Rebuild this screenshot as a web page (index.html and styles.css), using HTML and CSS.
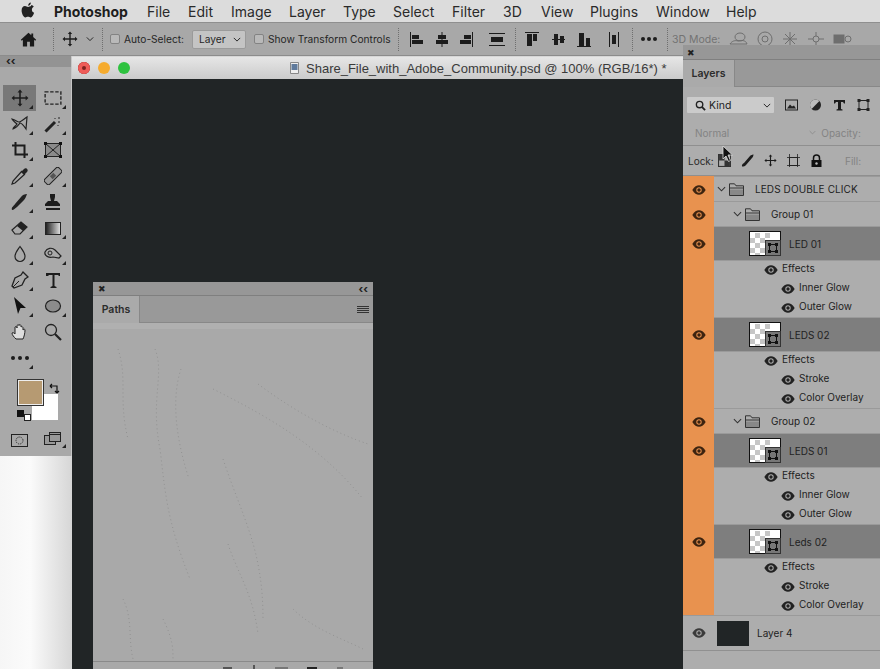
FILE: index.html
```html
<!DOCTYPE html>
<html lang="en">
<head>
<meta charset="utf-8">
<title>Photoshop</title>
<link rel="stylesheet" href="styles.css">
</head>
<body>
<svg class="defs" width="0" height="0" aria-hidden="true">
  <symbol id="eye" viewBox="0 0 14 10"><path fill-rule="evenodd" d="M.3 5C2.400 1.500 4.600.3 7 .3s4.600 1.200 6.700 4.700C11.600 8.500 9.400 9.700 7 9.700S2.400 8.500.3 5zM7 2.300a2.700 2.700 0 1 0 0 5.400 2.700 2.700 0 0 0 0-5.400z" fill="currentColor"/><circle cx="7" cy="5" r="1.700" fill="currentColor"/></symbol>
  <symbol id="folder" viewBox="0 0 15 13"><path d="M.5 12.500V.8h5l1.500 2h7.500v9.700z" fill="none" stroke="#333"/><path d="M1 6.500h13V12H1z" fill="#888"/><path d="M.5 5h14" stroke="#333"/></symbol>
  <symbol id="chev" viewBox="0 0 10 6"><path d="M1 1l4 4 4-4" fill="none" stroke="currentColor" stroke-width="1.200"/></symbol>
  <symbol id="thumb" viewBox="0 0 32 25"><rect width="32" height="25" fill="#111"/><rect x="1" y="1" width="30" height="23" fill="#fff"/><path fill="#c6c6c6" d="M1 7h5v5H1zM11 7h5v5h-5zM6 12h5v5H6zM16 12h5v5h-5zM1 17h5v5H1zM11 17h5v5h-5zM6 2h5v5H6zM16 2h5v5h-5zM6 22h5v2H6zM16 22h5v2h-5z"/><rect x="16.500" y="9.500" width="15" height="15" fill="#777" stroke="#333"/><rect x="20.500" y="13.500" width="7" height="7" fill="none" stroke="#111"/><path fill="#111" d="M19 12h3v3h-3zM26 12h3v3h-3zM19 19h3v3h-3zM26 19h3v3h-3z"/></symbol>
  <symbol id="corner" viewBox="0 0 4 4"><path d="M4 0v4H0z" fill="#222"/></symbol>
  <symbol id="move" viewBox="0 0 16 16"><path d="M8 .5L10.200 3H8.700v4.300H13V5.800L15.500 8 13 10.200V8.700H8.700V13h1.500L8 15.500 5.800 13h1.500V8.700H3v1.500L.5 8 3 5.800v1.500h4.300V3H5.800z" fill="#1c1c1c"/></symbol>
</svg>

<div class="screen">
  <header class="menubar">
    <svg class="apple" viewBox="0 0 14 16"><path fill="#222" d="M10.200 4.100c-1.300 0-1.900.8-3 .8-1.200 0-2-.8-3.200-.8C2 4.100.6 5.900.6 8.400c0 3 2 7 3.800 7 .9 0 1.400-.6 2.600-.6s1.600.6 2.600.6c1.500 0 3-2.700 3.500-4.600-1.300-.5-2.200-1.700-2.200-3.100 0-1.300.7-2.400 1.900-3-.7-.9-1.700-1.600-2.600-1.600zM9.800.4C8.400.6 7 2 7.200 3.700 8.700 3.700 10 2.100 9.800.4z"/></svg>
    <span class="menu-app">Photoshop</span>
    <nav class="menu-items">
      <span class="m-file">File</span><span class="m-edit">Edit</span><span class="m-image">Image</span><span class="m-layer">Layer</span><span class="m-type">Type</span><span class="m-select">Select</span><span class="m-filter">Filter</span><span class="m-3d">3D</span><span class="m-view">View</span><span class="m-plugins">Plugins</span><span class="m-window">Window</span><span>Help</span>
    </nav>
  </header>

  <div class="options">
    <svg class="o-home" viewBox="0 0 18 16"><path fill="#1a1a1a" d="M9 .8L.8 8.200l1 1L3 8.200V15.500h4.500v-5h3v5H15V8.200l1.200 1 1-1L14 5.300V1.500h-2v2z"/></svg>
    <i class="sep s-a"></i>
    <svg class="o-move"><use href="#move"/></svg>
    <svg class="o-chev"><use href="#chev"/></svg>
    <i class="sep s-b"></i>
    <i class="check c-a"></i>
    <span class="o-label l-auto">Auto-Select:</span>
    <span class="o-select">Layer<svg class="sel-chev"><use href="#chev"/></svg></span>
    <i class="check c-b"></i>
    <span class="o-label l-show">Show Transform Controls</span>
    <i class="sep s-c"></i>
    <svg class="o-align" viewBox="0 0 95 15" width="95" height="15">
      <g fill="#1c1c1c">
        <path d="M0 0h1v15H0zM2 3h7v4H2zM2 8h11v4H2z"/>
        <path d="M31.500 0h1v15h-1zM28 3h8v4h-8zM26 8h12v4H26z"/>
        <path d="M62 0h1v15h-1zM54 3h7v4h-7zM50 8h11v4H50z"/>
        <path d="M79 1h16v1H79zM79 13h16v1H79zM81 5h12v5H81z"/>
      </g>
    </svg>
    <i class="sep s-d"></i>
    <svg class="o-align2" viewBox="0 0 95 15" width="95" height="15">
      <g fill="#1c1c1c">
        <path d="M0 0h14v1H0zM2 2h5v12H2zM8 2h4v7H8z"/>
        <path d="M27 7h13v1H27zM29 2h4v11h-4zM35 4h4v7h-4z"/>
        <path d="M52 14h14v1H52zM54 1h5v13h-5zM61 6h4v8h-4z"/>
        <path d="M84 0h1v15h-1zM93 0h1v15h-1zM87 3h4v9h-4z"/>
      </g>
    </svg>
    <i class="sep s-dd"></i>
    <span class="dots"><b></b><b></b><b></b></span>
    <i class="sep s-e"></i>
    <span class="o-label o-3d">3D Mode:</span>
    <svg class="o-3dicons" viewBox="0 0 124 16" width="124" height="16">
      <g fill="none" stroke="#6e6e6e">
        <path d="M1 13c2-3 5-4 8-3 3-1 8-1 9 3H1zM6 6a5 4 0 1 1 10 0 5 4 0 1 1-10 0z"/>
        <circle cx="36" cy="8" r="7"/><circle cx="36" cy="8" r="3"/>
        <path d="M61 1v14M54 8h14M56 3l10 10M66 3L56 13"/>
        <circle cx="87" cy="8" r="3"/><path d="M87 1v4M87 11v4M79 8h5M90 8h5"/>
        <rect x="105" y="4" width="10" height="8" fill="#6e6e6e"/><circle cx="119" cy="8" r="3"/>
      </g>
    </svg>
  </div>

  <main class="desktop">
    <section class="doc">
      <div class="doc-title">
        <span class="light red"></span><span class="light amber"></span><span class="light green"></span>
        <svg class="doc-icon" viewBox="0 0 9 12"><path d="M.5.500h8v11h-8z" fill="#eee" stroke="#888"/><rect x="1.500" y="2" width="6" height="6" fill="#5f7a9c"/></svg>
        <span class="doc-name">Share_File_with_Adobe_Community.psd @ 100% (RGB/16*) *</span>
      </div>
    </section>

    <aside class="tools">
      <div class="tools-head">‹‹</div>
      <div class="tool-grid">
        <span class="tool active"><svg class="ic" viewBox="0 0 16 16"><use href="#move"/></svg><svg class="cn"><use href="#corner"/></svg></span>
        <span class="tool"><svg class="ic" viewBox="0 0 16 16"><rect x="1" y="2.500" width="14" height="11" fill="none" stroke="#222" stroke-width="1.200" stroke-dasharray="3 1.500"/></svg><svg class="cn"><use href="#corner"/></svg></span>
        <span class="tool"><svg class="ic" viewBox="0 0 18 18"><path d="M1 4c4 1 5 3 7 3s5-3 8-5l-1 12c-2-3-4-6-6-6-2 3-4 5-7 6 0-2 3-3 4-5-2-2-4-3-5-5z" fill="none" stroke="#222" stroke-width="1.200"/></svg><svg class="cn"><use href="#corner"/></svg></span>
        <span class="tool"><svg class="ic" viewBox="0 0 18 18"><path d="M1.500 16.500L11 7" stroke="#222" stroke-width="3"/><path d="M11 3v1M15 2v2M16 7h-2M14 10v1" stroke="#222"/></svg><svg class="cn"><use href="#corner"/></svg></span>
        <span class="tool"><svg class="ic" viewBox="0 0 18 18"><path d="M1 4.500h12.500V17M4.500 1v12.500H17" fill="none" stroke="#1c1c1c" stroke-width="2"/></svg><svg class="cn"><use href="#corner"/></svg></span>
        <span class="tool"><svg class="ic" viewBox="0 0 18 18"><rect x="1.500" y="2.500" width="15" height="13" fill="#8a8a8a" stroke="#222"/><path d="M1.500 2.500l15 13M16.500 2.500l-15 13" stroke="#222"/><path fill="#111" d="M0 1h3v3H0zM15 1h3v3h-3zM0 14h3v3H0zM15 14h3v3h-3z"/></svg></span>
        <span class="tool"><svg class="ic" viewBox="0 0 18 18"><path d="M11 4L2 14l-1 3 3-1 10-9" fill="none" stroke="#222" stroke-width="1.200"/><path d="M10 5l3 3 2-2 1-1c2-2-1-5-3-3l-1 1z" fill="#222"/></svg><svg class="cn"><use href="#corner"/></svg></span>
        <span class="tool"><svg class="ic" viewBox="0 0 18 18"><g transform="rotate(-45 9 9)"><rect x="-1" y="5.500" width="20" height="7" rx="2" fill="#999" stroke="#222"/><path d="M6.500 7h5v4h-5z" fill="#555"/></g></svg><svg class="cn"><use href="#corner"/></svg></span>
        <span class="tool"><svg class="ic" viewBox="0 0 18 18"><path d="M1 17c-1-3 2-4 3-6l6-7c1-2 4-3 6-3-1 3-2 5-3 6l-7 7c-2 1-3 3-5 3z" fill="#222"/></svg><svg class="cn"><use href="#corner"/></svg></span>
        <span class="tool"><svg class="ic" viewBox="0 0 18 18"><path d="M6 1h5v3l-1 4h3l3 3v2H1v-2l3-3h3L6 4zM2 15h14v2H2z" fill="#1c1c1c"/></svg></span>
        <span class="tool"><svg class="ic" viewBox="0 0 18 18"><path d="M1 11L10 3l6 5-7 7H4z" fill="none" stroke="#222" stroke-width="1.200"/><path d="M6 7l4-4 6 5-4 4z" fill="#222"/></svg><svg class="cn"><use href="#corner"/></svg></span>
        <span class="tool"><span class="grad"></span><svg class="cn"><use href="#corner"/></svg></span>
        <span class="tool"><svg class="ic" viewBox="0 0 18 18"><path d="M9 1.500c2 3 5 6 5 10a5 5 0 0 1-10 0c0-4 3-7 5-10z" fill="none" stroke="#222" stroke-width="1.200"/></svg><svg class="cn"><use href="#corner"/></svg></span>
        <span class="tool"><svg class="ic" viewBox="0 0 18 18"><path d="M1 7c2-4 7-5 10-2l6 6-2 2-6-1c-4 1-9-1-8-5z" fill="none" stroke="#222" stroke-width="1.200"/><circle cx="6" cy="8" r="2" fill="none" stroke="#222"/></svg><svg class="cn"><use href="#corner"/></svg></span>
        <span class="tool"><svg class="ic" viewBox="0 0 18 18"><path d="M12 1l5 5-3 2-3 6-8 3-2-2 3-8 6-3z" fill="none" stroke="#222" stroke-width="1.300"/><path d="M2 16l6-6" stroke="#222"/></svg><svg class="cn"><use href="#corner"/></svg></span>
        <span class="tool"><svg class="ic" viewBox="0 0 18 18"><path d="M2 2h14v3h-1l-1-1h-3.500v11l2 1v1H6.500v-1l2-1V4H5L4 5H2z" fill="#1c1c1c"/></svg></span>
        <span class="tool"><svg class="ic" viewBox="0 0 18 18"><path d="M3 0l12 11H9.500L7 17z" fill="#111"/></svg><svg class="cn"><use href="#corner"/></svg></span>
        <span class="tool"><svg class="ic" viewBox="0 0 18 18"><ellipse cx="9" cy="9" rx="7.500" ry="6" fill="#8c8c8c" stroke="#222" stroke-width="1.200"/></svg><svg class="cn"><use href="#corner"/></svg></span>
        <span class="tool"><svg class="ic" viewBox="0 0 18 18"><path d="M5 16c-2-2-4-4-4-6 1-1 2 0 3 1V4c1-1 2 0 2 1V2.500c1-1 2-1 2 0V2c1-1 2 0 2 1v1c1-1 2 0 2 1v2c1-1 2-1 2 0 0 3-1 7-2 9z" fill="#ddd" stroke="#222"/></svg></span>
        <span class="tool"><svg class="ic" viewBox="0 0 18 18"><circle cx="7" cy="7" r="5.500" fill="none" stroke="#222" stroke-width="1.300"/><path d="M11 11l6 6" stroke="#222" stroke-width="2.200"/></svg></span>
        <span class="tool"><span class="dots tool-dots"><b></b><b></b><b></b></span><svg class="cn"><use href="#corner"/></svg></span>
      </div>
      <div class="colors">
        <span class="fg"></span><span class="bg"></span>
        <svg class="swap" viewBox="0 0 11 11"><path d="M1 3h7v7M1 3l2-2M1 3l2 2M8 10l-2-2M8 10l2-2" fill="none" stroke="#111" stroke-width="1.200"/></svg>
        <span class="mini-bg"></span><span class="mini-fg"></span>
      </div>
      <div class="tools-foot">
        <svg viewBox="0 0 17 13" width="17" height="13"><rect x=".5" y=".5" width="16" height="12" fill="none" stroke="#222"/><circle cx="8.500" cy="6.500" r="3.500" fill="none" stroke="#222" stroke-dasharray="1 1"/></svg>
        <span class="foot-cn"><svg viewBox="0 0 17 13" width="17" height="13"><rect x=".5" y="3.500" width="11" height="9" fill="#999" stroke="#222"/><rect x="5.500" y=".5" width="11" height="9" fill="#999" stroke="#222"/><path d="M6 2.500h10" stroke="#222"/></svg><svg class="cn"><use href="#corner"/></svg></span>
      </div>
    </aside>

    <section class="paths">
      <div class="panel-head"><span class="x">✖</span><span class="coll">‹‹</span></div>
      <div class="tabs">
        <span class="tab">Paths</span>
        <span class="burger"><i></i><i></i><i></i><i></i></span>
      </div>
      <div class="strip"></div>
      <div class="paths-body">
        <svg class="traces" viewBox="0 0 280 336" width="280" height="336" preserveAspectRatio="none">
          <g fill="none" stroke="#929292" stroke-dasharray="1 3">
            <path d="M25 20c10 30 0 50 10 90"/>
            <path d="M62 20c10 25-5 50 5 100 5 40 6 70 30 130"/>
            <path d="M88 40c-10 30-5 70 8 110"/>
            <path d="M120 60c60 30 110 60 150 110"/>
            <path d="M165 55c40 30 80 50 110 60"/>
            <path d="M130 130c20 60 40 90 40 160"/>
            <path d="M135 215c10 30 25 50 30 90"/>
            <path d="M30 270c10 20 5 40 10 60"/>
            <path d="M70 290c10 20 10 30 10 40"/>
            <path d="M200 280c20 20 50 30 70 40"/>
          </g>
        </svg>
      </div>
      <div class="paths-foot"><i class="pf f1"></i><i class="pf f2"></i><i class="pf f3"></i><i class="pf f4"></i><i class="pf f5"></i></div>
    </section>

    <section class="layers">
      <div class="panel-head layers-head"><span class="x">✖</span></div>
      <div class="tabs layers-tabs"><span class="tab">Layers</span></div>
      <div class="filter-row">
        <span class="kind">
          <svg class="kind-search" viewBox="0 0 12 12"><circle cx="5" cy="5" r="3.500" fill="none" stroke="#222" stroke-width="1.500"/><path d="M7.500 7.500L11 11" stroke="#222" stroke-width="2"/></svg>Kind<svg class="kind-chev"><use href="#chev"/></svg>
        </span>
        <svg class="f-ic" viewBox="0 0 13 11"><rect x=".5" y=".5" width="12" height="10" fill="none" stroke="#222"/><path d="M2 9l3-4 2 2 2-1 2 3z" fill="#222"/></svg>
        <svg class="f-ic" viewBox="0 0 12 12"><circle cx="6" cy="6" r="5.500" fill="#222"/><path d="M6 .5a5.500 5.500 0 0 0 0 11z" fill="#bbb" transform="rotate(45 6 6)"/></svg>
        <svg class="f-ic" viewBox="0 0 12 12"><path d="M.5 1h11v3.500h-1L9.500 3H7.500v7l1.500.5V11.500H3V10.500l1.500-.5V3H2.500L1.500 4.500h-1z" fill="#1c1c1c"/></svg>
        <svg class="f-ic" viewBox="0 0 12 12"><rect x="1.500" y="1.500" width="9" height="9" fill="none" stroke="#222"/><path fill="#222" d="M0 0h3v3H0zM9 0h3v3H9zM0 9h3v3H0zM9 9h3v3H9z"/></svg>
      </div>
      <div class="blend-row">
        <span class="faint">Normal</span><svg class="blend-chev"><use href="#chev"/></svg><span class="faint opacity">Opacity:</span>
      </div>
      <div class="lock-row">
        <span class="lock-label">Lock:</span>
        <svg class="l-ic" viewBox="0 0 12 12"><rect x=".5" y=".5" width="11" height="11" fill="none" stroke="#333"/><path fill="#333" d="M1 1h5v5H1zM6 6h5v5H6z"/></svg>
        <svg class="l-ic" viewBox="0 0 13 13"><path d="M1 12.500c-.500-2 1-3 2-3.500l6-7c1-1 3-1.500 3.500-1.500 0 1-.5 2.500-1.500 3.500L5 11c-1 1-2 1.500-4 1.500z" fill="#1c1c1c"/></svg>
        <svg class="l-ic" viewBox="0 0 16 16"><use href="#move"/></svg>
        <svg class="l-ic" viewBox="0 0 13 13"><path d="M2.500 3.500h8v8h-8z" fill="none" stroke="#222"/><path d="M2.500 0v13M10.500 0v13M0 3.500h13M0 11.500h13" stroke="#222" stroke-width=".8"/></svg>
        <svg class="l-ic" viewBox="0 0 12 13"><path d="M1 6h10v7H1z" fill="#111"/><path d="M3 6V4a3 3 0 0 1 6 0v2" fill="none" stroke="#111" stroke-width="1.500"/><circle cx="6" cy="9.500" r="1.200" fill="#bbb"/></svg>
        <span class="faint fill">Fill:</span>
      </div>

      <div class="layer-list">
        <div class="row group"><span class="vis on"><svg class="eye"><use href="#eye"/></svg></span><svg class="g-chev"><use href="#chev"/></svg><svg class="g-folder"><use href="#folder"/></svg><span class="name top-name">LEDS DOUBLE CLICK</span></div>
        <div class="row group sub"><span class="vis on"><svg class="eye"><use href="#eye"/></svg></span><svg class="g-chev"><use href="#chev"/></svg><svg class="g-folder"><use href="#folder"/></svg><span class="name">Group 01</span></div>

        <div class="row layer"><span class="vis on"><svg class="eye"><use href="#eye"/></svg></span><svg class="thumb"><use href="#thumb"/></svg><span class="name">LED 01</span></div>
        <div class="fx"><span class="vis on"></span><div class="fx-list"><div class="fx-row"><svg class="eye"><use href="#eye"/></svg>Effects</div><div class="fx-row fx-sub"><svg class="eye"><use href="#eye"/></svg>Inner Glow</div><div class="fx-row fx-sub"><svg class="eye"><use href="#eye"/></svg>Outer Glow</div></div></div>

        <div class="row layer"><span class="vis on"><svg class="eye"><use href="#eye"/></svg></span><svg class="thumb"><use href="#thumb"/></svg><span class="name">LEDS 02</span></div>
        <div class="fx"><span class="vis on"></span><div class="fx-list"><div class="fx-row"><svg class="eye"><use href="#eye"/></svg>Effects</div><div class="fx-row fx-sub"><svg class="eye"><use href="#eye"/></svg>Stroke</div><div class="fx-row fx-sub"><svg class="eye"><use href="#eye"/></svg>Color Overlay</div></div></div>

        <div class="row group sub"><span class="vis on"><svg class="eye"><use href="#eye"/></svg></span><svg class="g-chev"><use href="#chev"/></svg><svg class="g-folder"><use href="#folder"/></svg><span class="name">Group 02</span></div>

        <div class="row layer"><span class="vis on"><svg class="eye"><use href="#eye"/></svg></span><svg class="thumb"><use href="#thumb"/></svg><span class="name">LEDS 01</span></div>
        <div class="fx"><span class="vis on"></span><div class="fx-list"><div class="fx-row"><svg class="eye"><use href="#eye"/></svg>Effects</div><div class="fx-row fx-sub"><svg class="eye"><use href="#eye"/></svg>Inner Glow</div><div class="fx-row fx-sub"><svg class="eye"><use href="#eye"/></svg>Outer Glow</div></div></div>

        <div class="row layer"><span class="vis on"><svg class="eye"><use href="#eye"/></svg></span><svg class="thumb"><use href="#thumb"/></svg><span class="name">Leds 02</span></div>
        <div class="fx"><span class="vis on"></span><div class="fx-list"><div class="fx-row"><svg class="eye"><use href="#eye"/></svg>Effects</div><div class="fx-row fx-sub"><svg class="eye"><use href="#eye"/></svg>Stroke</div><div class="fx-row fx-sub"><svg class="eye"><use href="#eye"/></svg>Color Overlay</div></div></div>

        <div class="row plain"><span class="vis"><svg class="eye"><use href="#eye"/></svg></span><span class="swatch"></span><span class="name">Layer 4</span></div>
      </div>
    </section>

    <svg class="cursor" viewBox="0 0 12 18"><path d="M1 1v13l3-3 2.500 5.500 2-1L6 10h4.500z" fill="#111" stroke="#ddd" stroke-width=".8"/></svg>
  </main>
</div>
</body>
</html>
```

FILE: styles.css
```css
* { box-sizing: border-box; }
html, body { margin: 0; padding: 0; }
body { width: 880px; height: 669px; overflow: hidden; font-family: "Inter", "Liberation Sans", sans-serif; color: #1e1e1e; background: #212526; }
.defs { position: absolute; }
svg { display: block; flex: none; }
.screen { width: 880px; height: 669px; display: flex; flex-direction: column; position: relative; overflow: hidden; }

/* menu bar */
.menubar { height: 23px; flex: none; background: #dcdcdc; display: flex; align-items: center; font-size: 14px; border-bottom: 1px solid #8f8f8f; }
.apple { width: 14px; height: 16px; margin: -2px 0 0 21px; }
.menu-app { font-weight: 700; margin-left: 19px; width: 93px; font-size: 14px; }
.menu-items { display: flex; color: #2a2a2a; }
.m-file { width: 41px; } .m-edit { width: 43px; } .m-image { width: 58px; } .m-layer { width: 54px; }
.m-type { width: 50px; } .m-select { width: 59px; } .m-filter { width: 51px; } .m-3d { width: 38px; }
.m-view { width: 49px; } .m-plugins { width: 66px; } .m-window { width: 70px; }

/* options bar */
.options { height: 33px; flex: none; background: #a8a8a8; display: flex; align-items: center; font-size: 10.200px; color: #262626; border-bottom: 1px solid #8c8c8c; }
.o-home { width: 17px; height: 15px; margin-left: 20px; }
.sep { width: 1px; height: 23px; flex: none; border-left: 1px dotted #6f6f6f; }
.s-a { margin-left: 16px; }
.o-move { width: 16px; height: 16px; margin-left: 8px; }
.o-chev { width: 8px; height: 6px; margin-left: 8px; color: #222; }
.s-b { margin-left: 8px; }
.check { width: 10px; height: 10px; flex: none; background: #b9b9b9; border: 1px solid #838383; border-radius: 2px; }
.c-a { margin-left: 7px; }
.o-label { flex: none; white-space: nowrap; }
.l-auto { margin-left: 4px; width: 64px; }
.o-select { width: 54px; height: 19px; flex: none; margin-left: 4px; background: #c4c4c4; border-radius: 2px; border: 1px solid #9a9a9a; display: flex; align-items: center; padding-left: 6px; position: relative; font-size: 10.200px; }
.sel-chev { width: 8px; height: 5px; margin-left: 7px; color: #222; }
.c-b { margin-left: 8px; }
.l-show { margin-left: 4px; width: 125px; }
.s-c { margin-left: 5px; }
.o-align { margin-left: 11px; }
.s-d { margin-left: 10px; }
.o-align2 { margin-left: 9px; }
.s-dd { margin-left: 12px; }
.dots { display: flex; gap: 2px; flex: none; }
.dots b { width: 4px; height: 4px; border-radius: 50%; background: #1c1c1c; display: block; }
.options .dots { margin-left: 8px; }
.s-e { margin-left: 10px; }
.o-3d { margin-left: 4px; width: 50px; color: #737373; font-size: 10.500px; }
.o-3dicons { margin-left: 7px; }

/* free desktop */
.desktop { flex: 1; position: relative; background: linear-gradient(90deg, #f6f6f6 0, #fbfbfb 30px, #d6d6d6 72px); }

.doc { position: absolute; left: 72px; top: 1px; right: 0; bottom: 0; background: #212526; }
.doc-title { height: 22px; background: linear-gradient(#e6e6e6, #cbcbcb); display: flex; align-items: center; font-size: 12.500px; color: #3a3a3a; }
.light { width: 12px; height: 12px; border-radius: 50%; flex: none; margin-right: 8px; }
.light.red { background: #ee5c58; margin-left: 6px; box-shadow: inset 0 0 0 4px #ee5c58, inset 0 0 0 6px #7d2320; }
.light.amber { background: #f5ab2e; }
.light.green { background: #2ec23f; }
.doc-icon { width: 9px; height: 12px; margin-left: 152px; }
.doc-name { margin-left: 7px; white-space: nowrap; font-family: "Liberation Sans", sans-serif; font-size: 13px; }

.tools { position: absolute; left: 0; top: 0; width: 72px; height: 400px; background: #a9a9a9; border-right: 1px solid #c7c7c7; display: flex; flex-direction: column; }
.tools-head { height: 11px; background: #939393; font-size: 11px; line-height: 10px; padding-left: 6px; font-weight: 700; flex: none; }
.tool-grid { display: grid; grid-template-columns: 33px 33px; grid-auto-rows: 26px; padding: 5px 0 0 3px; margin-top: 13px; }
.tool { display: flex; align-items: center; justify-content: center; position: relative; }
.tool.active { background: #787878; }
.ic { width: 18px; height: 18px; }
.cn { position: absolute; right: 3px; bottom: 2px; width: 4px; height: 4px; }
.grad { width: 16px; height: 13px; background: linear-gradient(90deg, #222, #ddd); border: 1px solid #222; }
.tool-dots { gap: 3px; }
.colors { position: relative; height: 44px; margin-top: 8px; flex: none; }
.fg { position: absolute; left: 18px; top: 1px; width: 25px; height: 25px; background: #b69a72; border: 1px solid #eee; z-index: 1; box-shadow: 0 0 0 1px #333; }
.bg { position: absolute; left: 32px; top: 15px; width: 26px; height: 26px; background: #fff; }
.swap { position: absolute; left: 49px; top: 4px; width: 11px; height: 11px; }
.mini-bg { position: absolute; left: 21px; top: 32px; width: 7px; height: 7px; background: #fff; margin: 3px 0 0 3px; border: 1px solid #222; }
.mini-fg { position: absolute; left: 17px; top: 31px; width: 7px; height: 7px; background: #111; }
.tools-foot { display: flex; gap: 16px; padding: 9px 0 0 11px; align-items: center; }
.foot-cn { position: relative; display: block; width: 22px; height: 16px; }
.foot-cn .cn { right: 0; bottom: 0; }

.panel-head { height: 14px; background: #979797; display: flex; align-items: center; justify-content: space-between; padding: 0 5px; font-size: 9px; line-height: 1; color: #222; border-bottom: 1px solid #7f7f7f; flex: none; }
.coll { font-size: 11px; font-weight: 700; line-height: 8px; }
.tabs { height: 27px; background: #999; display: flex; align-items: stretch; font-size: 10.500px; font-weight: 600; position: relative; justify-content: space-between; flex: none; border-bottom: 1px solid #888; }
.tab { width: 47px; background: #aaa; display: flex; align-items: center; justify-content: center; color: #2c2c2c; border-right: 1px solid #888; margin-bottom: -1px; }

.paths { position: absolute; left: 93px; top: 226px; width: 280px; bottom: 0; background: #a9a9a9; display: flex; flex-direction: column; border-radius: 3px 3px 0 0; }
.burger { display: flex; flex-direction: column; justify-content: center; gap: 1px; width: 12px; margin-right: 4px; }
.burger i { height: 1px; background: #333; display: block; }
.strip { height: 6px; background: #b0b0b0; flex: none; }
.paths-body { flex: 1; overflow: hidden; min-height: 0; }
.traces { display: block; }
.paths-foot { height: 8px; border-top: 1px solid #8a8a8a; flex: none; display: flex; align-items: flex-end; }
.pf { display: block; height: 2px; background: #555; }
.f1 { margin-left: 130px; width: 9px; }
.f2 { margin-left: 21px; width: 2px; height: 4px; }
.f3 { margin-left: 20px; width: 13px; background: #777; }
.f4 { margin-left: 19px; width: 10px; background: #222; }
.f5 { margin-left: 20px; width: 6px; background: #777; }

.layers { position: absolute; left: 683px; top: -11px; width: 197px; bottom: 0; background: #adadad; display: flex; flex-direction: column; }
.layers-head { height: 15px; padding-left: 4px; }
.layers-tabs { height: 27px; }
.layers-tabs .tab { width: 52px; }
.filter-row { height: 31px; flex: none; display: flex; align-items: center; padding: 5px 0 0 4px; }
.kind { width: 87px; height: 16px; background: #cbcbcb; display: flex; align-items: center; font-size: 10.500px; padding-left: 8px; border-radius: 1px; }
.kind-search { width: 11px; height: 11px; margin-right: 3px; }
.kind-chev { width: 8px; height: 5px; margin-left: auto; margin-right: 3px; color: #222; }
.f-ic { width: 13px; height: 12px; margin-left: 11px; }
.f-ic + .f-ic { margin-left: 11px; }
.blend-row { height: 28px; flex: none; display: flex; align-items: center; padding: 2px 0 0 12px; border-bottom: 1px solid #8f8f8f; font-size: 10px; }
.faint { color: #838383; }
.blend-chev { width: 7px; height: 5px; margin-left: 80px; color: #8a8a8a; }
.opacity { margin-left: 5px; }
.lock-row { height: 30px; flex: none; display: flex; align-items: center; padding-left: 5px; font-size: 10px; color: #2a2a2a; border-bottom: 1px solid #8f8f8f; }
.lock-label { width: 30px; }
.l-ic { width: 13px; height: 13px; margin-right: 10px; }
.fill { margin-left: 12px; }

.layer-list { display: flex; flex-direction: column; font-size: 10px; color: #222; border-bottom: 1px solid #909090; }
.row { display: flex; align-items: center; flex: none; border-top: 1px solid #9a9a9a; }
.vis { width: 31px; align-self: stretch; flex: none; display: flex; align-items: center; justify-content: center; color: #3a3a3a; }
.vis.on { background: #e8924f; color: #3d2410; margin-top: -1px; padding-top: 2px; }
.eye { width: 14px; height: 10px; flex: none; }
.group { height: 25px; }
.g-chev { width: 9px; height: 6px; margin-left: 3px; color: #333; }
.g-folder { width: 15px; height: 13px; margin-left: 3px; }
.name { white-space: nowrap; }
.top-name { font-size: 10px; letter-spacing: .1px; }
.group .name { margin-left: 11px; }
.sub .g-chev { margin-left: 19px; }
.sub .g-folder { margin-left: 3px; }
.layer { height: 34px; background: #7e7e7e; }
.thumb { width: 32px; height: 31px; margin-left: 35px; }
.layer .name { margin-left: 8px; }
.fx { display: flex; height: 57px; flex: none; border-top: 1px solid #9a9a9a; }
.fx-list { flex: 1; display: flex; flex-direction: column; margin-top: -3px; }
.fx-row { height: 19px; display: flex; align-items: center; gap: 4px; padding-left: 50px; }
.fx-row .eye { margin-top: 4px; }
.fx-sub { padding-left: 67px; }
.plain { height: 35px; }
.swatch { width: 32px; height: 25px; background: #212526; margin-left: 3px; }
.plain .name { margin-left: 8px; }

.cursor { position: absolute; left: 722px; top: 89px; width: 12px; height: 18px; }
```
